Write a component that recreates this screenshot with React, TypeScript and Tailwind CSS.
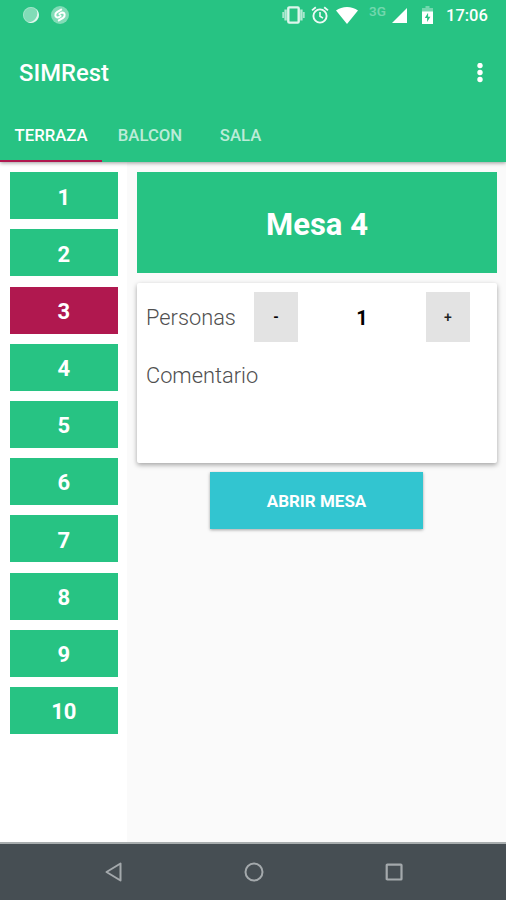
import { useState } from "react"

const tabs = [
  { name: "TERRAZA", width: "w-[102px]" },
  { name: "BALCON", width: "w-[96px]" },
  { name: "SALA", width: "w-[85px]" },
]

const tables = [1, 2, 3, 4, 5, 6, 7, 8, 9, 10]

function StatusBar() {
  return (
    <div className="flex h-[30px] items-center text-white">
      <svg className="ml-[22px]" width="18" height="18" viewBox="0 0 18 18">
        <circle cx="9" cy="9" r="8" fill="white" fillOpacity="0.42" />
        <path d="M14.2 3A8 8 0 0 1 5.5 16.2A9 9 0 0 0 14.2 3z" fill="white" fillOpacity="0.75" />
        <circle cx="9" cy="9" r="7.6" fill="none" stroke="white" strokeOpacity="0.25" />
      </svg>
      <svg className="ml-[10px]" width="20" height="20" viewBox="0 0 20 20">
        <circle cx="10" cy="10" r="9" fill="white" fillOpacity="0.42" />
        <g fill="none" stroke="white" strokeWidth="2" strokeLinecap="round" strokeLinejoin="round">
          <path d="M11.2 4.6L7 7.2C4.4 8.9 5 12.4 7.7 12.5C9.1 12.5 9.8 11.6 10.6 10.9" />
          <path d="M8.8 15.4L13 12.8C15.6 11.1 15 7.6 12.3 7.5C10.9 7.5 10.2 8.4 9.4 9.1" />
        </g>
      </svg>

      {/* Vibrate */}
      <svg className="ml-[212px]" width="23" height="18" viewBox="0 0 23 18">
        <rect x="6.3" y="1.4" width="10.4" height="15.2" rx="1" fill="none" stroke="white" strokeOpacity="0.85" strokeWidth="2.4" />
        <path d="M3.6 3.5v11M19.4 3.5v11" stroke="white" strokeOpacity="0.65" strokeWidth="2.4" />
        <path d="M1.2 6v6M21.8 6v6" stroke="white" strokeOpacity="0.6" strokeWidth="1.8" />
      </svg>

      {/* Alarm */}
      <svg className="ml-[6px]" width="18" height="18" viewBox="0 0 18 18" fill="none" stroke="white" strokeOpacity="0.92">
        <circle cx="9" cy="10" r="6.6" strokeWidth="1.9" />
        <path d="M9 6v4.3l3 1.8" strokeWidth="1.6" />
        <path d="M1 4.4l3.8-3.2M17 4.4l-3.8-3.2" strokeWidth="1.8" />
      </svg>

      {/* Wifi */}
      <svg className="ml-[7px]" width="22" height="17" viewBox="0 0 22 17">
        <path d="M11 17L0 3.6C3 1.2 7 0 11 0s8 1.2 11 3.6z" fill="white" />
      </svg>
      <span className="relative -top-[3px] ml-[11px] w-[18px] text-[13.5px] leading-none font-medium opacity-35">3G</span>
      <svg className="ml-[5px]" width="15" height="15" viewBox="0 0 15 15">
        <path d="M15 0v15H0z" fill="white" />
      </svg>

      {/* Battery */}
      <svg className="ml-[15px]" width="11" height="18" viewBox="0 0 11 18">
        <path d="M3.5 0h4v2H11v4H0V2h3.5z" fill="white" fillOpacity="0.35" />
        <path d="M0 5.5h11V18H0zM6.1 6.8L2.8 12h2.3v4l3.3-5.2H6.1z" fill="white" fillRule="evenodd" />
      </svg>
      <span className="ml-[13px] pt-[2px] text-[16.5px] font-medium">17:06</span>
    </div>
  )
}

function NavBar() {
  return (
    <div className="flex h-[58px] items-center border-t-2 border-[#a8adae] bg-[#464e53]">
      <svg className="ml-[104px]" width="19" height="20" viewBox="0 0 19 20" fill="none" stroke="#a4a9ac" strokeWidth="2" strokeLinejoin="round">
        <path d="M16.5 1.5v17L2.5 10z" />
      </svg>
      <svg className="ml-[121px]" width="20" height="20" viewBox="0 0 20 20" fill="none" stroke="#a4a9ac" strokeWidth="2">
        <circle cx="10" cy="10" r="8.5" />
      </svg>
      <svg className="ml-[120px]" width="20" height="20" viewBox="0 0 20 20" fill="none" stroke="#a4a9ac" strokeWidth="2.2">
        <rect x="2.7" y="2.7" width="14.8" height="14.8" rx="0.6" />
      </svg>
    </div>
  )
}

export default function App() {
  const [activeTab, setActiveTab] = useState("TERRAZA")
  const [selected, setSelected] = useState(3)
  const [people, setPeople] = useState(1)

  return (
    <div className="flex h-[900px] w-[506px] flex-col overflow-hidden bg-[#fafafa] font-[Roboto,sans-serif]">
      {/* App bar */}
      <header className="z-10 h-[162px] shrink-0 bg-[#27c383] shadow-[0_1px_4px_rgba(0,0,0,0.4)]">
        <StatusBar />
        <div className="flex h-[85px] items-center justify-between pr-[23px] pl-[19px] text-white">
          <h1 className="pt-[3px] text-[23.8px] font-medium">SIMRest</h1>
          <button aria-label="Menu">
            <svg width="6" height="20" viewBox="0 0 6 20" fill="white">
              <circle cx="3" cy="2.5" r="2.7" />
              <circle cx="3" cy="9.5" r="2.7" />
              <circle cx="3" cy="16.5" r="2.7" />
            </svg>
          </button>
        </div>
        <nav className="flex h-[47px]">
          {tabs.map((t) => (
            <button
              key={t.name}
              onClick={() => setActiveTab(t.name)}
              className={`${t.width} border-b-[2.5px] pb-[3px] text-[16.7px] font-medium ${
                activeTab === t.name ? "border-[#b0184f] text-white" : "border-transparent text-white/70"
              }`}
            >
              {t.name}
            </button>
          ))}
        </nav>
      </header>

      <main className="flex min-h-0 flex-1">
        {/* Table list */}
        <aside className="flex w-[127px] shrink-0 flex-col gap-[10.2px] bg-white pt-[10.3px] pr-[9.5px] pl-[10px]">
          {tables.map((n) => (
            <button
              key={n}
              onClick={() => setSelected(n)}
              className={`h-[47px] shrink-0 pt-[2.5px] text-[22px] font-bold text-white ${
                selected === n ? "bg-[#b0184f]" : "bg-[#27c383]"
              }`}
            >
              {n}
            </button>
          ))}
        </aside>

        <section className="flex flex-1 flex-col pt-[10px] pr-[9px] pl-[10px]">
          <div className="flex h-[101px] items-center justify-center bg-[#27c383] pt-[6px] text-[31px] font-bold text-white">
            Mesa 4
          </div>

          <div className="mt-[10px] h-[180px] rounded-[2px] bg-white px-[9px] pt-[9px] text-[21.8px] text-[#505050] shadow-[0_2px_5px_rgba(0,0,0,0.35)]">
            <div className="flex h-[50px] items-center">
              <span className="w-[108px] pt-[2px] font-light">Personas</span>
              <button
                onClick={() => setPeople(Math.max(1, people - 1))}
                className="h-[50px] w-[44px] bg-[#e3e3e3] text-[14px] font-bold text-black"
              >
                -
              </button>
              <span className="w-[128px] pt-[2px] text-center text-[20px] font-bold text-black">{people}</span>
              <button
                onClick={() => setPeople(people + 1)}
                className="h-[50px] w-[44px] bg-[#e3e3e3] text-[14px] font-medium text-[#222]"
              >
                +
              </button>
            </div>
            <p className="mt-[18px] font-light">Comentario</p>
          </div>

          <button className="mt-[9px] ml-[73px] h-[57px] w-[213px] bg-[#32c5d0] pt-[2px] text-[17px] font-bold text-white shadow-[0_1px_3px_rgba(0,0,0,0.35)]">
            ABRIR MESA
          </button>
        </section>
      </main>

      <NavBar />
    </div>
  )
}
